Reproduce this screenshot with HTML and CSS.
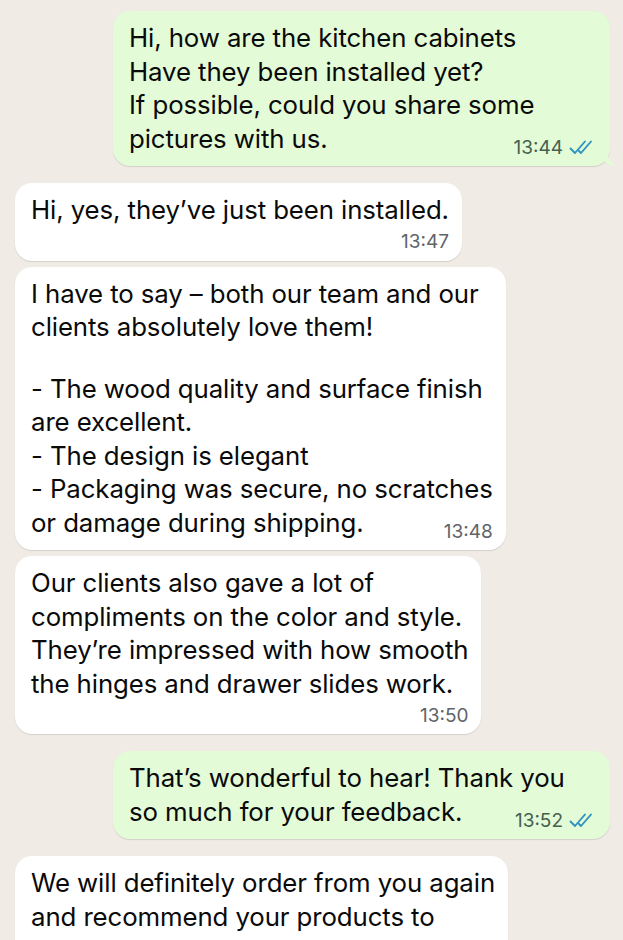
FILE: index.html
```html
<!DOCTYPE html>
<html lang="en">
<head>
    <meta charset="UTF-8">
    <meta name="viewport" content="width=device-width, initial-scale=1.0">
    <title>Chat</title>
    <link rel="stylesheet" href="styles.css">
</head>
<body>
    <div class="chat">
        <div class="msg sent tail">
            <p>Hi, how are the kitchen cabinets<br>Have they been installed yet?<br>If possible, could you share some<br>pictures with us.</p>
            <div class="meta inline">
                <span class="time">13:44</span>
                <svg class="ticks" viewBox="0 0 26 16" width="26" height="16"><path d="M1.5 9.5 L6 14 L16 2.5 M10 12 L12 14 L22 2.5"/></svg>
            </div>
        </div>

        <div class="msg received first">
            <p>Hi, yes, they’ve just been installed.</p>
            <div class="meta">
                <span class="time">13:47</span>
            </div>
        </div>

        <div class="msg received">
            <p>I have to say – both our team and our<br>clients absolutely love them!</p>
            <p>- The wood quality and surface finish<br>are excellent.<br>- The design is elegant<br>- Packaging was secure, no scratches<br>or damage during shipping.</p>
            <div class="meta inline">
                <span class="time">13:48</span>
            </div>
        </div>

        <div class="msg received">
            <p>Our clients also gave a lot of<br>compliments on the color and style.<br>They’re impressed with how smooth<br>the hinges and drawer slides work.</p>
            <div class="meta">
                <span class="time">13:50</span>
            </div>
        </div>

        <div class="msg sent first">
            <p>That’s wonderful to hear! Thank you<br>so much for your feedback.</p>
            <div class="meta inline">
                <span class="time">13:52</span>
                <svg class="ticks" viewBox="0 0 26 16" width="26" height="16"><path d="M1.5 9.5 L6 14 L16 2.5 M10 12 L12 14 L22 2.5"/></svg>
            </div>
        </div>

        <div class="msg received first">
            <p>We will definitely order from you again<br>and recommend your products to<br>others.</p>
        </div>
    </div>
</body>
</html>
```

FILE: styles.css
```css
html, body {
    height: 100%;
    overflow: hidden;
}

body {
    margin: 0;
    background-color: #f0ebe5;
    font-family: Inter, "Noto Sans", sans-serif;
    color: #0a0a0a;
}

.chat {
    display: flex;
    flex-direction: column;
    padding: 11px 13px 0 15px;
}

.msg {
    position: relative;
    padding: 10px 15px 9px 16px;
    border-radius: 17px;
    box-shadow: 0 1px 1px rgba(0, 0, 0, 0.12);
    margin-top: 6px;
}

.msg.first {
    margin-top: 17px;
}

.msg:first-child {
    margin-top: 0;
}

.sent {
    align-self: flex-end;
    width: 466px;
    background-color: #e3fbd7;
}

.received {
    align-self: flex-start;
    background-color: #fff;
    padding-right: 13px;
}

.msg p {
    margin: 0;
    font-size: 25.8px;
    line-height: 33.5px;
    letter-spacing: -0.1px;
}

.msg p + p {
    margin-top: 28px;
}

.meta {
    display: flex;
    justify-content: flex-end;
    align-items: center;
    gap: 6px;
    height: 20px;
    margin-top: 5px;
}

.meta.inline {
    margin-top: -18px;
}

.time {
    font-size: 19px;
    color: #5f6468;
}

.sent .time {
    color: #46604f;
}

.ticks {
    fill: none;
    stroke: #2f93bf;
    stroke-width: 1.9;
    stroke-linecap: round;
    stroke-linejoin: round;
}

.tail::after {
    content: "";
    position: absolute;
    right: -6px;
    bottom: 0;
    width: 14px;
    height: 14px;
    background-color: #e3fbd7;
    border-bottom-left-radius: 14px 12px;
    clip-path: polygon(0 0, 100% 100%, 0 100%);
}
```
